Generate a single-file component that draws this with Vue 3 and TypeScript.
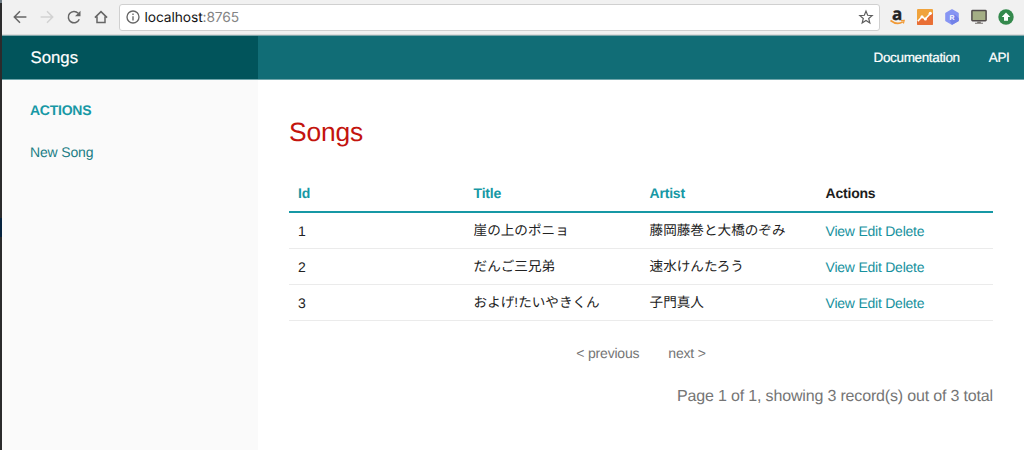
<script setup lang="ts">
interface Song {
  id: number
  title: string
  artist: string
}

const songs: Song[] = [
  { id: 1, title: '崖の上のポニョ', artist: '藤岡藤巻と大橋のぞみ' },
  { id: 2, title: 'だんご三兄弟', artist: '速水けんたろう' },
  { id: 3, title: 'およげ!たいやきくん', artist: '子門真人' },
]
const actions: string[] = ['View', 'Edit', 'Delete']
</script>

<template>
  <div class="screen">
    <div class="desktop-edge"><i class="edge-top"></i><i class="edge-mark"></i></div>
    <div class="window">
      <div class="toolbar">
        <div class="nav-icons">
          <svg width="14" height="14" viewBox="0 0 14 14" class="line"><path d="M13.4 7H1.5M7 1.3L1.3 7L7 12.7" /></svg>
          <svg width="14" height="14" viewBox="0 0 14 14" class="line faded"><path d="M.6 7h11.9M7 1.3L12.7 7L7 12.7" /></svg>
          <svg width="14" height="14" viewBox="0 0 14 14" class="line"><path d="M12.3 9.3A5.7 5.7 0 1 1 11.2 3.2" /><path d="M13.5.8v5.5H8z" class="solid" /></svg>
          <svg width="14" height="14" viewBox="0 0 14 14" class="line"><path d="M.9 7.6L7 1.6l6.1 6M3 6.5v6h8v-6" /></svg>
        </div>
        <div class="omnibox">
          <svg width="14" height="14" viewBox="0 0 14 14" class="line info"><circle cx="7" cy="7" r="6" /><path d="M7 6.2v4.2M7 3.4v1.5" /></svg>
          <span class="url">localhost<span class="port">:8765</span></span>
          <svg width="14" height="14" viewBox="0 0 14 14" class="star"><path d="M7 1.1l1.65 4.2 4.5.3-3.45 2.9 1.1 4.4L7 10.5l-3.8 2.4 1.1-4.4L.85 5.6l4.5-.3z" /></svg>
        </div>
        <div class="extensions">
          <svg width="16" height="16" viewBox="0 0 16 16">
            <text x="7.2" y="10.7" text-anchor="middle" class="amazon">a</text>
            <path d="M.5 11.5Q7 16.5 12.8 12.9" fill="none" stroke="#f19a36" stroke-width="1.6" />
            <path d="M10.9 11.6l3.3-.3-.8 3.2" fill="none" stroke="#f19a36" stroke-width="1.2" />
          </svg>
          <svg width="16" height="16" viewBox="0 0 16 16">
            <rect width="16" height="16" rx="1" fill="#f0a33c" />
            <path d="M0 12l4-3 4 2 7-7 1 1v10q0 1-1 1H1q-1 0-1-1z" fill="#e96f35" />
            <path d="M.8 12.2L5 7.7l3.2 2.4 5.7-6" fill="none" stroke="#fff" stroke-width="1.5" />
            <circle cx="5" cy="7.7" r="1.5" fill="#fff" /><circle cx="8.4" cy="10" r="1.5" fill="#fff" /><circle cx="13.3" cy="4.3" r="1.6" fill="#fff" />
          </svg>
          <svg width="16" height="16" viewBox="0 0 16 16">
            <path d="M8 1l6 3.5v7L8 15l-6-3.5v-7z" fill="#8795f3" stroke="#8795f3" stroke-width="1.6" stroke-linejoin="round" />
            <path d="M10.7 5.3l4.1 4v2.6L8 15.8l-2-4.4z" fill="#7181e8" />
            <text x="8" y="10.6" text-anchor="middle" class="hex-letter">R</text>
          </svg>
          <svg width="16" height="16" viewBox="0 0 16 16">
            <rect x=".9" y="1.6" width="14.2" height="10.2" rx=".7" fill="#a4ae85" stroke="#514b4b" stroke-width="1.5" />
            <path d="M6.2 12.5h3.6v1.2H12v1H4v-1h2.2z" fill="#77736f" />
          </svg>
          <svg width="16" height="16" viewBox="0 0 16 16">
            <circle cx="8" cy="8" r="7.7" fill="#34894d" />
            <path d="M8 3.4l4.3 4.7H10v3.7H6V8.1H3.7z" fill="#fff" />
          </svg>
        </div>
      </div>

      <header class="topbar">
        <div class="brand">Songs</div>
        <nav class="links"><a>Documentation</a><a>API</a></nav>
      </header>

      <div class="page">
        <aside class="sidebar">
          <div class="side-heading">ACTIONS</div>
          <a class="side-link">New Song</a>
        </aside>
        <main class="content">
          <h3>Songs</h3>
          <table>
            <thead>
              <tr><th>Id</th><th>Title</th><th>Artist</th><th class="plain">Actions</th></tr>
            </thead>
            <tbody>
              <tr v-for="song in songs" :key="song.id">
                <td class="number">{{ song.id }}</td>
                <td>{{ song.title }}</td>
                <td>{{ song.artist }}</td>
                <td class="actions"><template v-for="(action, i) in actions" :key="action">{{ i ? ' ' : '' }}<a>{{ action }}</a></template></td>
              </tr>
            </tbody>
          </table>
          <div class="pagination"><span>&lt; previous</span><span>next &gt;</span></div>
          <p class="summary">Page 1 of 1, showing 3 record(s) out of 3 total</p>
        </main>
      </div>
    </div>
  </div>
</template>

<style>
html, body { margin: 0; overflow: hidden; }
</style>

<style scoped>
.screen {
  width: 1024px; height: 450px; display: flex; overflow: hidden; background: #fff;
  font-family: "Liberation Sans", "Noto Sans CJK JP", sans-serif; font-size: 13.5px; color: #222;
  text-rendering: geometricPrecision;
}
.desktop-edge { width: 2px; flex: none; background: #2b2b2c; display: flex; flex-direction: column; }
.edge-top { height: 3px; background: #6e7c85; margin-bottom: 215px; }
.edge-mark { height: 19px; background: #06233f; }
.window { flex: 1; min-width: 0; display: flex; flex-direction: column; }
svg { display: block; flex: none; overflow: visible; }
.toolbar { height: 35px; flex: none; box-sizing: border-box; background: #f1f1f1; border-bottom: 1px solid #dcdcdc; display: flex; align-items: center; padding-left: 11px; }
.nav-icons { display: flex; gap: 13px; }
.line { fill: none; stroke: #666; stroke-width: 1.5; }
.faded { stroke: #d2d2d2; }
.solid { fill: #666; stroke: none; }
.omnibox { width: 761px; height: 27px; box-sizing: border-box; margin-left: 11px; border: 1px solid #d0d0d0; border-radius: 3px; background: #fff; display: flex; align-items: center; padding: 0 6px; }
.info { stroke-width: 1.35; }
.url { flex: 1; margin-left: 4.5px; padding-top: 1px; font-family: Inter, sans-serif; font-size: 13.8px; letter-spacing: -.1px; color: #151515; }
.port { color: #848484; }
.star { fill: none; stroke: #5c5c5c; stroke-width: 1.2; }
.extensions { display: flex; gap: 11px; margin-left: 10px; }
.amazon { font: bold 17px/1 "Open Sans", sans-serif; fill: #242424; stroke: #242424; stroke-width: .4px; }
.hex-letter { font: bold 7px "Liberation Sans", sans-serif; fill: #fff; }
.topbar { height: 45px; flex: none; box-sizing: border-box; border-top: 1px solid #7fa6aa; border-bottom: 1px solid #6fa5aa; display: flex; background: #116d76; color: #fff; }
.brand { width: 256px; box-sizing: border-box; padding-left: 28.5px; background: #01545b; font-size: 16.8px; line-height: 43px; -webkit-text-stroke: .2px #fff; }
.links { flex: 1; display: flex; justify-content: flex-end; gap: 29px; padding-right: 14.5px; font-size: 13.5px; line-height: 43px; letter-spacing: -.35px; -webkit-text-stroke: .2px #fff; }
.page { flex: 1; display: flex; }
.sidebar { width: 256px; flex: none; box-sizing: border-box; padding: 20px 0 0 28px; background: #fafafa; }
.side-heading { font-size: 14px; font-weight: bold; line-height: 20px; letter-spacing: -.25px; color: #1798a5; }
.side-link { display: block; margin-top: 22px; font-size: 14px; line-height: 20px; letter-spacing: -.15px; color: #217d85; }
.content { flex: 1; padding: 0 31px; }
h3 { margin: 34px 0 0; font-size: 26.4px; letter-spacing: -.15px; font-weight: normal; line-height: 36px; color: #c3140e; }
table { width: 704px; margin-top: 24px; table-layout: fixed; border-collapse: separate; border-spacing: 0; }
th { height: 39px; box-sizing: border-box; padding: 1px 9px 0; border-bottom: 2px solid #1798a5; text-align: left; font-size: 14px; font-weight: bold; letter-spacing: -.22px; color: #1798a5; }
th.plain { color: #1d1d1d; }
td { height: 36px; box-sizing: border-box; padding: 0 9px; border-bottom: 1px solid #ebebeb; font-size: 13.6px; line-height: 20px; white-space: nowrap; }
.number, .actions { font-size: 14px; letter-spacing: -.24px; }
th + th, td + td { padding-left: 8.6px; }
.actions a { color: #17919e; }
.pagination { display: flex; justify-content: center; gap: 29px; margin-top: 22px; line-height: 20px; font-size: 14px; letter-spacing: -.2px; color: #757575; }
.summary { margin: 21px 0 0; text-align: right; font-size: 16px; line-height: 25px; letter-spacing: -.165px; color: #757575; }
</style>
